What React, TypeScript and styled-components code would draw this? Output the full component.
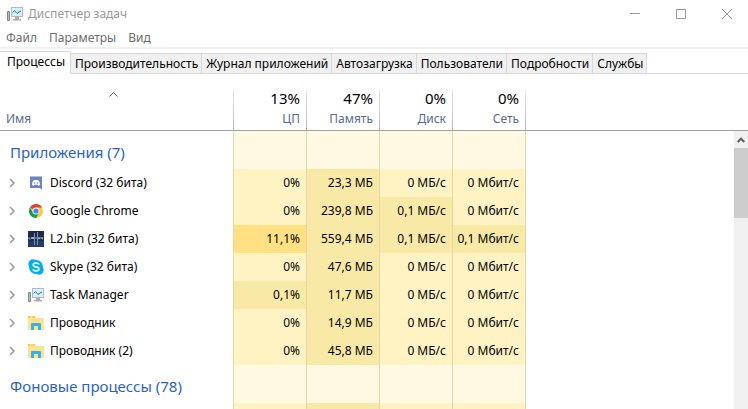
import React from "react";
import styled, { createGlobalStyle } from "styled-components";

const GlobalStyle = createGlobalStyle`
  *, *::before, *::after { box-sizing: border-box; }
  body {
    margin: 0;
    background: #fff;
    color: #000;
    font: 12px/16px "Noto Sans", "Open Sans", sans-serif;
  }
  button {
    margin: 0;
    padding: 0;
    border: 0;
    background: none;
    color: inherit;
    font: inherit;
  }
`;

const Window = styled.main`
  display: flex;
  flex-direction: column;
  height: 100vh;
  overflow: hidden;
`;

const TitleBar = styled.header`
  display: flex;
  align-items: center;
  flex: none;
  gap: 5px;
  height: 28px;
  padding-left: 7px;
`;

const Title = styled.h1`
  flex: 1;
  margin: 0;
  color: #999;
  font-size: 12px;
  font-weight: 400;
`;

const WindowControls = styled.div`
  display: flex;
  margin-right: -2px;
`;

const WindowButton = styled.button`
  display: grid;
  place-items: center;
  width: 46px;
  height: 28px;
  color: #999;
`;

const MenuBar = styled.nav`
  display: flex;
  flex: none;
  gap: 12px;
  height: 21px;
  padding-left: 6px;
  border-bottom: 2px solid #f0f0f0;
  color: #6d6d6d;
`;

const MenuButton = styled.button`
  height: 20px;
`;

const TabList = styled.div`
  display: flex;
  align-items: flex-end;
  flex: none;
  height: 25px;
  box-shadow: inset 0 -1px #d9d9d9;
`;

const Tab = styled.button<{ $active?: boolean }>`
  height: ${(p) => (p.$active ? 23 : 21)}px;
  padding: ${(p) => (p.$active ? "0 5px 2px 7px" : "0 3px 0 4px")};
  border: solid #d9d9d9;
  border-width: ${(p) => (p.$active ? "1px 1px 0 0" : "1px 1px 1px 0")};
  background: ${(p) => (p.$active ? "#fff" : "#f0f0f0")};
  white-space: nowrap;
`;

const Content = styled.section`
  display: grid;
  grid-template-rows: 100%;
  flex: 1;
  min-height: 0;
  padding-top: 15px;
  overflow: hidden;
`;

const ProcessTable = styled.table`
  grid-area: 1 / 1;
  align-self: start;
  width: 100%;
  table-layout: fixed;
  border-collapse: separate;
  border-spacing: 0;
`;

const NameCol = styled.col`
  width: 234px;
`;

const MetricCol = styled.col`
  width: 73px;
`;

const HeadCell = styled.th<{ $filler?: boolean }>`
  height: 42px;
  padding: 0;
  border-bottom: 1px solid #a0a0a0;
  background: ${(p) =>
    p.$filler ? "none" : "linear-gradient(#e8e8e8, #b4b4b4) right / 1px 100% no-repeat"};
  color: #5b6b8f;
  font-weight: 400;
`;

const SortButton = styled.button<{ $name?: boolean }>`
  display: flex;
  flex-direction: column;
  align-items: ${(p) => (p.$name ? "flex-start" : "flex-end")};
  width: 100%;
  height: 41px;
  padding: ${(p) => (p.$name ? "0 14px 0 6px" : "0 7px")};
`;

const SortMark = styled.span`
  display: flex;
  align-self: center;
  flex: none;
  height: 22px;
  padding-top: 3px;
`;

const Total = styled.span`
  height: 22px;
  color: #000;
  font-size: 15px;
  line-height: 18px;
`;

const GroupHeading = styled.th`
  height: 38px;
  padding: 4px 10px 0;
  border-right: 1px solid #e8d5a0;
  color: #2a63c4;
  font-size: 15px;
  font-weight: 400;
  text-align: left;
`;

const NameCell = styled.th`
  height: 28px;
  padding: 0 0 0 7px;
  border-right: 1px solid #e8d5a0;
  font-weight: 400;
  text-align: left;
`;

const NameContent = styled.div`
  display: flex;
  align-items: center;
  white-space: nowrap;
`;

const Expander = styled.button`
  display: grid;
  place-items: center;
  width: 10px;
  height: 16px;
  margin-right: 11px;
`;

const ProcessIcon = styled.svg`
  width: 16px;
  height: 16px;
  margin-right: 6px;
`;

const heat = {
  none: "#fff8e3",
  low: "#fff3c4",
  medium: "#f8eaa6",
  high: "#ffe082",
};
type Heat = keyof typeof heat;

const Metric = styled.td<{ $heat: Heat }>`
  padding: 0 6px 0 0;
  border-right: 1px solid #e8d5a0;
  background: ${(p) => heat[p.$heat]};
  text-align: right;
  white-space: nowrap;
`;

const ScrollBar = styled.div`
  grid-area: 1 / 1;
  justify-self: end;
  width: 14px;
  margin-top: 42px;
  background: #f0f0f0;
`;

const ScrollButton = styled.button`
  display: grid;
  place-items: center;
  width: 100%;
  height: 17px;
`;

const ScrollThumb = styled.div`
  height: 70px;
  background: #cdcdcd;
`;

const MonitorArt = () => (
  <>
    <path d="M.5 5.500h2v9h-2z" fill="#b9bcbc" stroke="#858989" />
    <path d="M0 7h1v2H0z" fill="#35a852" />
    <path d="M4 1h12v10H4z" fill="#b4b9bb" />
    <path d="M5 2h10v8H5z" fill="#d6f0fb" />
    <path d="M5.500 6.500l2-2 2.500 3 2-1.500 2-1" fill="none" stroke="#237fac" />
    <path d="M8 11h4v2h2v1.500H6V13h2z" fill="#a8acae" />
  </>
);

const FolderArt = () => (
  <>
    <path d="M0 1h7l1 2h8v12H0z" fill="#ffe290" />
    <path d="M0 1h7v2H0z" fill="#f5c84a" />
    <path d="M2 1.500h3v1H2z" fill="#fff3c8" />
    <path d="M3 15V9q0-1 1-1h8q1 0 1 1v6h-3v-4H6v4z" fill="#35b2e8" />
  </>
);

const icons: Record<string, React.ReactNode> = {
  discord: (
    <>
      <path d="M2 1.500h12v13.500l-2-2H2z" fill="#6c83c4" />
      <path
        d="M4 10q0-3 1.200-4.500L7 5h2l1.800.5Q12 7 12 10l-1.700.7-.8-1h-3l-.8 1z"
        fill="#fff"
      />
      <circle cx="6.600" cy="8" r=".8" fill="#6c83c4" />
      <circle cx="9.400" cy="8" r=".8" fill="#6c83c4" />
    </>
  ),
  chrome: (
    <>
      <circle cx="8" cy="8" r="7" fill="#fcc934" />
      <path d="M8 8L1.940 4.500A7 7 0 0 1 14.060 4.500H8z" fill="#db4437" />
      <path d="M1.940 4.500A7 7 0 0 0 8 15l3.030-5.250L8 8 4.970 9.750z" fill="#0f9d58" />
      <circle cx="8" cy="8" r="3.500" fill="#f5f5f5" />
      <circle cx="8" cy="8" r="2.600" fill="#4285f4" />
    </>
  ),
  lineage: (
    <>
      <path d="M0 0h16v16H0z" fill="#1b2b4d" />
      <path d="M0 10h16v6H0z" fill="#233c68" />
      <path d="M6.500 2v12M9.500 1v13" stroke="#8592aa" />
      <path d="M1 6v2h1.500M3.500 6v2M4.500 8V6l1 2V6M7 7h2M11.500 6.500h-1v1.500h1zM13 8V6M14 6v2h1M14 7h1" fill="none" stroke="#c3cad5" strokeWidth=".7" />
    </>
  ),
  skype: (
    <>
      <circle cx="5" cy="5" r="4.700" fill="#00aff0" />
      <circle cx="11" cy="11" r="4.700" fill="#00aff0" />
      <circle cx="8" cy="8" r="7" fill="#00aff0" />
      <path
        d="M11 5.500Q10.300 4 8 4 5.300 4 5.300 5.900 5.300 7.400 8 7.900q2.900.5 2.900 2.200Q10.900 12 8.100 12 5.600 12 5 10.300"
        fill="none"
        stroke="#fff"
        strokeWidth="1.700"
      />
    </>
  ),
  monitor: <MonitorArt />,
  folder: <FolderArt />,
};

const tabs = [
  "Процессы",
  "Производительность",
  "Журнал приложений",
  "Автозагрузка",
  "Пользователи",
  "Подробности",
  "Службы",
];

const columns = [
  ["13%", "ЦП"],
  ["47%", "Память"],
  ["0%", "Диск"],
  ["0%", "Сеть"],
];

type Process = { icon: string; name: string; values: [string, Heat][] };

const processes: Process[] = [
  { icon: "discord", name: "Discord (32 бита)", values: [["0%", "low"], ["23,3 МБ", "medium"], ["0 МБ/с", "low"], ["0 Мбит/с", "low"]] },
  { icon: "chrome", name: "Google Chrome", values: [["0%", "low"], ["239,8 МБ", "medium"], ["0,1 МБ/с", "medium"], ["0 Мбит/с", "low"]] },
  { icon: "lineage", name: "L2.bin (32 бита)", values: [["11,1%", "high"], ["559,4 МБ", "medium"], ["0,1 МБ/с", "medium"], ["0,1 Мбит/с", "medium"]] },
  { icon: "skype", name: "Skype (32 бита)", values: [["0%", "low"], ["47,6 МБ", "medium"], ["0 МБ/с", "low"], ["0 Мбит/с", "low"]] },
  { icon: "monitor", name: "Task Manager", values: [["0,1%", "medium"], ["11,7 МБ", "medium"], ["0 МБ/с", "low"], ["0 Мбит/с", "low"]] },
  { icon: "folder", name: "Проводник", values: [["0%", "low"], ["14,9 МБ", "medium"], ["0 МБ/с", "low"], ["0 Мбит/с", "low"]] },
  { icon: "folder", name: "Проводник (2)", values: [["0%", "low"], ["45,8 МБ", "medium"], ["0 МБ/с", "low"], ["0 Мбит/с", "low"]] },
];

const trailingHeat: Heat[] = ["low", "medium", "low", "low"];

const GroupRow = ({ children }: { children: React.ReactNode }) => (
  <tr>
    <GroupHeading scope="rowgroup">{children}</GroupHeading>
    {columns.map(([, label]) => (
      <Metric key={label} $heat="none" />
    ))}
    <td />
  </tr>
);

const ProcessRow = ({ icon, name, values }: Process) => (
  <tr>
    <NameCell scope="row">
      <NameContent>
        <Expander aria-label={`Развернуть ${name}`}>
          <svg width="8" height="10" viewBox="0 0 8 10" fill="none" stroke="#a0a0a0" strokeWidth="1.700">
            <path d="M2 1l4 4-4 4" />
          </svg>
        </Expander>
        <ProcessIcon viewBox="0 0 16 16" aria-hidden="true">
          {icons[icon]}
        </ProcessIcon>
        {name}
      </NameContent>
    </NameCell>
    {values.map(([value, level], i) => (
      <Metric key={i} $heat={level}>
        {value}
      </Metric>
    ))}
    <td />
  </tr>
);

export default function App() {
  return (
    <>
      <GlobalStyle />
      <Window>
        <TitleBar>
          <svg width="16" height="16" viewBox="0 0 16 16" aria-hidden="true">
            <MonitorArt />
          </svg>
          <Title>Диспетчер задач</Title>
          <WindowControls>
            <WindowButton aria-label="Свернуть">
              <svg width="10" height="10" stroke="currentColor">
                <path d="M0 4.500h10" />
              </svg>
            </WindowButton>
            <WindowButton aria-label="Развернуть">
              <svg width="10" height="10" stroke="currentColor" fill="none">
                <path d="M.5.5h9v9h-9z" />
              </svg>
            </WindowButton>
            <WindowButton aria-label="Закрыть">
              <svg width="10" height="10" stroke="currentColor">
                <path d="M0 0l10 10M10 0L0 10" />
              </svg>
            </WindowButton>
          </WindowControls>
        </TitleBar>
        <MenuBar>
          <MenuButton>Файл</MenuButton>
          <MenuButton>Параметры</MenuButton>
          <MenuButton>Вид</MenuButton>
        </MenuBar>
        <TabList role="tablist">
          {tabs.map((tab, i) => (
            <Tab key={tab} role="tab" aria-selected={i === 0} $active={i === 0}>
              {tab}
            </Tab>
          ))}
        </TabList>
        <Content>
          <ProcessTable>
            <colgroup>
              <NameCol />
              {columns.map(([, label]) => (
                <MetricCol key={label} />
              ))}
              <col />
            </colgroup>
            <thead>
              <tr>
                <HeadCell scope="col" aria-sort="ascending">
                  <SortButton $name>
                    <SortMark>
                      <svg width="9" height="5" fill="none" stroke="#666">
                        <path d="M.5 4.500l4-4 4 4" />
                      </svg>
                    </SortMark>
                    Имя
                  </SortButton>
                </HeadCell>
                {columns.map(([total, label]) => (
                  <HeadCell key={label} scope="col">
                    <SortButton>
                      <Total>{total}</Total>
                      {label}
                    </SortButton>
                  </HeadCell>
                ))}
                <HeadCell as="td" $filler />
              </tr>
            </thead>
            <tbody>
              <GroupRow>Приложения (7)</GroupRow>
              {processes.map((process) => (
                <ProcessRow key={process.name} {...process} />
              ))}
            </tbody>
            <tbody>
              <GroupRow>Фоновые процессы (78)</GroupRow>
              <tr>
                <NameCell as="td" />
                {trailingHeat.map((level, i) => (
                  <Metric key={i} $heat={level} />
                ))}
                <td />
              </tr>
            </tbody>
          </ProcessTable>
          <ScrollBar>
            <ScrollButton aria-label="Прокрутить вверх">
              <svg width="8" height="6" fill="none" stroke="#606060" strokeWidth="2">
                <path d="M.7 5L4 1.700 7.300 5" />
              </svg>
            </ScrollButton>
            <ScrollThumb />
          </ScrollBar>
        </Content>
      </Window>
    </>
  );
}
